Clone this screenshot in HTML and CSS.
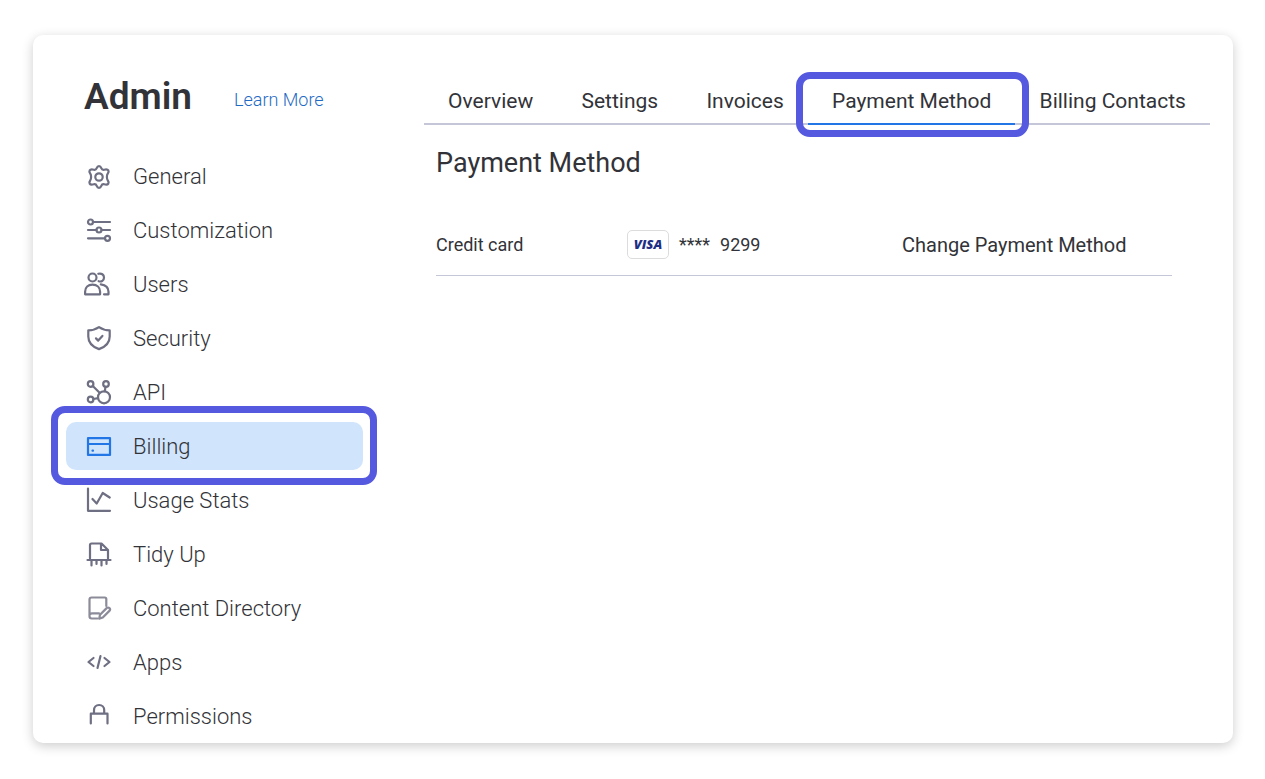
FILE: index.html
```html
<!DOCTYPE html>
<html lang="en">
<head>
  <meta charset="UTF-8">
  <meta name="viewport" content="width=device-width, initial-scale=1.0">
  <title>Admin - Billing</title>
  <link rel="stylesheet" href="styles.css">
</head>
<body>
  <div class="admin">
    <aside class="sidebar">
      <header class="sidebar-header">
        <h1>Admin</h1>
        <a class="learn-more" href="#">Learn More</a>
      </header>

      <nav class="menu">
        <a class="menu-item" href="#">
          <svg class="icon" viewBox="0 -1 26 26"><path d="M13 2.200c1.300 0 1.900.8 2.300 1.900.5 1.300 1.600 1.900 2.900 1.600 1.700-.4 3.400-.5 4.100.7.700 1.200.2 2.200-.5 3.100-.9 1.100-.9 2-.9 3.500s0 2.400.9 3.500c.7.900 1.200 1.900.5 3.100-.7 1.200-2.400 1.100-4.100.7-1.300-.3-2.400.3-2.900 1.600-.4 1.100-1 1.900-2.300 1.900s-1.900-.8-2.300-1.900c-.5-1.300-1.600-1.900-2.900-1.600-1.700.4-3.400.5-4.100-.7-.7-1.200-.2-2.200.5-3.100.9-1.100.9-2 .9-3.500s0-2.400-.9-3.500c-.7-.9-1.200-1.900-.5-3.100.7-1.200 2.400-1.100 4.100-.7 1.300.3 2.400-.3 2.900-1.600.4-1.100 1-1.900 2.300-1.900z"/><circle cx="13" cy="13" r="3.700"/></svg>
          General
        </a>
        <a class="menu-item" href="#">
          <svg class="icon" viewBox="0 0 26 26"><circle cx="4.500" cy="5" r="2.500"/><path d="M7 5h17M2 13h8.500M15.500 13H24M2 21.300h17"/><circle cx="13" cy="13" r="2.500"/><circle cx="21.500" cy="21.300" r="2.500"/></svg>
          Customization
        </a>
        <a class="menu-item" href="#">
          <svg class="icon" viewBox="0 0 26 26"><circle cx="6.500" cy="6.500" r="4"/><path d="M-.9 23.300v-2.500c0-4.600 3-7.100 7.400-7.100s7.600 2.500 7.600 7.100v2.500z"/><path d="M12.300 2.800c3.300-1 5.700 1 5.700 3.700 0 3-2.500 4.700-5.400 3.700M14.800 13.300c4.500.5 7.700 3.200 7.700 7.500v2.500H18"/></svg>
          Users
        </a>
        <a class="menu-item" href="#">
          <svg class="icon" viewBox="0 0 26 26"><path d="M13 2.200c3.300 2.300 6.700 3.200 10.700 3.200v6c0 6.300-4.600 10.500-10.700 12.700C6.900 21.900 2.300 17.700 2.300 11.400v-6c4 0 7.400-.9 10.700-3.200z"/><path d="M10 13.400l2.200 2.200 4.200-4.700"/></svg>
          Security
        </a>
        <a class="menu-item" href="#">
          <svg class="icon" viewBox="0 0 26 26"><circle cx="4.600" cy="5" r="2.800"/><circle cx="20" cy="5" r="2.800"/><circle cx="4.600" cy="20.500" r="2.800"/><circle cx="18" cy="18.300" r="6"/><path d="M6.800 7l6.800 6.800M19.500 7.800l-.7 4.400M7.400 20l4.700-.8"/></svg>
          API
        </a>
        <a class="menu-item active" href="#" aria-current="page">
          <svg class="icon" viewBox="0 0 26 26"><path d="M2 5.200h22v16.700H2zM2 11h22"/><path d="M6.500 17.700h.5"/></svg>
          Billing
        </a>
        <a class="menu-item" href="#">
          <svg class="icon" viewBox="0 0 26 26"><path d="M2 1.500v22.300h22M6.500 12l4.200 4.500 6-10.500 7 4.500"/></svg>
          Usage Stats
        </a>
        <a class="menu-item" href="#">
          <svg class="icon" viewBox="0 0 26 26"><path d="M4 17.500V4c0-1 .6-1.500 1.500-1.500h10L22 9v8.500M15 2.800V9h6.800M1.500 19h23M5.500 19v5.500M10.500 19v4M15.500 19v5.500M20.500 19v4"/></svg>
          Tidy Up
        </a>
        <a class="menu-item" href="#">
          <svg class="icon icon-soft" viewBox="0 0 26 26"><path d="M20.300 11V4c0-1-.5-1.500-1.500-1.500H5.600C4.200 2.500 3.500 3.300 3.500 4.500v16.800c0 1.400.9 2.200 2.200 2.200h5.800M3.800 19.300c.5-.7 1.200-1 2.200-1h7"/><path d="M13.200 23.600l.8-3.900 6.600-6.600c.8-.8 2-.8 2.800 0s.8 2 0 2.800l-6.600 6.600z"/></svg>
          Content Directory
        </a>
        <a class="menu-item" href="#">
          <svg class="icon" viewBox="0 0 26 26"><path d="M7.500 9L2.500 13l5 4M18.500 9l5 4-5 4M14.500 7l-3 12"/></svg>
          Apps
        </a>
        <a class="menu-item" href="#">
          <svg class="icon" viewBox="0 0 26 26"><path d="M4.800 20.500V10.700h16.700v9.800M8 10.500V7.200C8 4.200 10 2 13.100 2s5.100 2.200 5.100 5.200v3.300"/></svg>
          Permissions
        </a>
      </nav>
    </aside>

    <main class="content">
      <nav class="tabs">
        <a class="tab" href="#">Overview</a>
        <a class="tab" href="#">Settings</a>
        <a class="tab" href="#">Invoices</a>
        <a class="tab active" href="#" aria-current="page">Payment Method</a>
        <a class="tab" href="#">Billing Contacts</a>
      </nav>

      <section class="payment">
        <h2>Payment Method</h2>
        <table class="payment-table">
          <tr>
            <th class="col-type" scope="row">Credit card</th>
            <td class="col-card">
              <div class="card-number">
                <span class="visa">VISA</span>
                <span>****</span>
                <span>9299</span>
              </div>
            </td>
            <td><button class="change-button" type="button">Change Payment Method</button></td>
          </tr>
        </table>
      </section>
    </main>
  </div>
</body>
</html>
```
FILE: styles.css
```css
* {
  box-sizing: border-box;
}
body {
  margin: 0;
  min-height: 100vh;
  padding: 35px 32px 36px 33px;
  display: flex;
  font-family: Roboto, sans-serif;
  color: #323338;
  background: #fff;
}
a {
  color: inherit;
  text-decoration: none;
}
.admin {
  flex: 1;
  display: flex;
  gap: 61px;
  padding-right: 23px;
  border-radius: 10px;
  background: #fff;
  box-shadow: 0 3px 12px rgba(0, 0, 0, 0.2);
}

/* Sidebar */
.sidebar {
  flex: none;
  width: 330px;
  padding-left: 33px;
}
.sidebar-header {
  display: flex;
  align-items: flex-start;
  gap: 42px;
  height: 117px;
  padding: 40px 0 0 18px;
}
h1 {
  margin: 0;
  font-size: 37px;
  line-height: 44px;
  font-weight: 600;
}
.learn-more {
  font-size: 18px;
  line-height: 50px;
  font-weight: 300;
  color: #1f6bc4;
}
.menu {
  display: flex;
  flex-direction: column;
  gap: 6px;
}
.menu-item {
  position: relative;
  display: flex;
  align-items: center;
  gap: 21px;
  height: 48px;
  padding: 0 20px;
  border-radius: 10px;
  font-size: 22px;
  font-weight: 300;
}
.menu-item.active {
  background: #d0e4fc;
}
.icon {
  flex: none;
  width: 26px;
  height: 26px;
  overflow: visible;
  fill: none;
  stroke: #6e6f82;
  stroke-width: 2.2;
  stroke-linecap: round;
  stroke-linejoin: round;
}
.icon-soft {
  stroke: #8b8b9a;
}
.menu-item.active .icon {
  stroke: #2376e5;
}

/* Highlight frames */
.menu-item.active::after,
.tab.active::after {
  content: "";
  position: absolute;
  z-index: 1;
  border: 7px solid #5559df;
  border-radius: 14px;
  pointer-events: none;
}
.menu-item.active::after {
  inset: -16px -14px -15px -15px;
}
.tab.active::after {
  inset: -12px -14px -14px -12px;
}

/* Content */
.content {
  flex: 1;
  padding-top: 49px;
}
.tabs {
  display: flex;
  border-bottom: 2px solid #c5c7d8;
}
.tab {
  position: relative;
  flex: auto;
  height: 41px;
  margin-bottom: -2px;
  padding: 0 20px;
  border-bottom: 2px solid transparent;
  font-size: 21px;
  line-height: 34px;
  text-align: center;
  white-space: nowrap;
}
.tab.active {
  border-bottom-color: #2376e5;
}
.payment {
  padding: 20px 38px 0 12px;
}
h2 {
  margin: 0;
  font-size: 27px;
  line-height: 36px;
  font-weight: 400;
}
.payment-table {
  width: 100%;
  margin-top: 34px;
  border-collapse: collapse;
  table-layout: fixed;
}
.payment-table tr {
  border-bottom: 1px solid #c5c7d8;
}
.payment-table th,
.payment-table td {
  height: 60px;
  padding: 0;
  font-size: 18px;
  font-weight: 400;
  text-align: left;
}
.payment-table .col-type {
  width: 191px;
}
.payment-table .col-card {
  width: 275px;
}
.card-number {
  display: flex;
  align-items: center;
  gap: 10px;
}
.visa {
  width: 42px;
  height: 29px;
  border: 1px solid #dcdcdc;
  border-radius: 5px;
  font-family: "Open Sans", sans-serif;
  font-size: 13px;
  line-height: 27px;
  font-style: italic;
  font-weight: 800;
  text-align: center;
  color: #1f2f86;
}
.change-button {
  padding: 0;
  border: 0;
  background: none;
  font: inherit;
  font-size: 20px;
  color: inherit;
  cursor: pointer;
}
```
